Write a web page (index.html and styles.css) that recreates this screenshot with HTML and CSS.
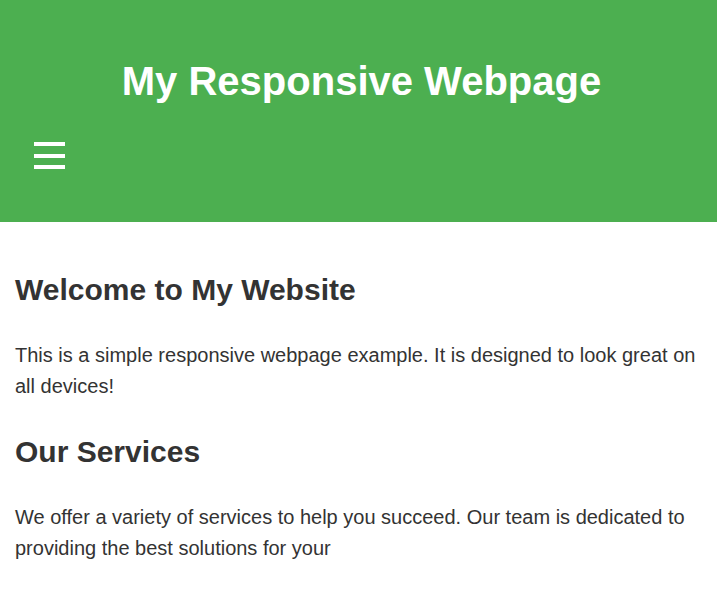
FILE: index.html
```html
<!DOCTYPE html>
<html lang="en">
<head>
<meta charset="utf-8">
<title>My Responsive Webpage</title>
<link rel="stylesheet" href="styles.css">
</head>
<body>
<header class="site-header">
  <h1 class="site-title">My Responsive Webpage</h1>
  <nav class="site-nav">
    <button class="menu-toggle" aria-label="Menu">
      <span class="bar"></span><span class="bar"></span><span class="bar"></span>
    </button>
  </nav>
</header>
<main class="content">
  <section class="block">
    <h2 class="block-title">Welcome to My Website</h2>
    <p class="block-text">This is a simple responsive webpage example. It is designed to look great on all devices!</p>
  </section>
  <section class="block">
    <h2 class="block-title">Our Services</h2>
    <p class="block-text">We offer a variety of services to help you succeed. Our team is dedicated to providing the best solutions for your</p>
  </section>
</main>
</body>
</html>
```
FILE: styles.css
```css
* { box-sizing: border-box; }
body {
  margin: 0;
  font-family: "Liberation Sans", Arial, sans-serif;
  color: #333;
  background: #fff;
}
.site-header {
  background: #4caf50;
  color: #fff;
  padding: 22px 0 0 6px;
  height: 222px;
}
.site-title {
  margin: 36px 0 0;
  text-align: center;
  font-size: 40px;
  line-height: 46px;
  font-weight: bold;
}
.site-nav {
  padding: 38px 28px 0;
}
.menu-toggle {
  display: flex;
  flex-direction: column;
  gap: 7.5px;
  padding: 0;
  border: 0;
  background: none;
  cursor: pointer;
}
.bar {
  display: block;
  width: 31px;
  height: 4px;
  background: #fff;
}
.content {
  padding: 51px 15px 0;
  display: flex;
  flex-direction: column;
  gap: 33px;
}
.block-title {
  font-size: 30px;
  line-height: 34px;
  margin: 0;
  font-weight: bold;
}
.block-text {
  font-size: 20px;
  line-height: 31px;
  margin: 33px 0 0;
}
```
